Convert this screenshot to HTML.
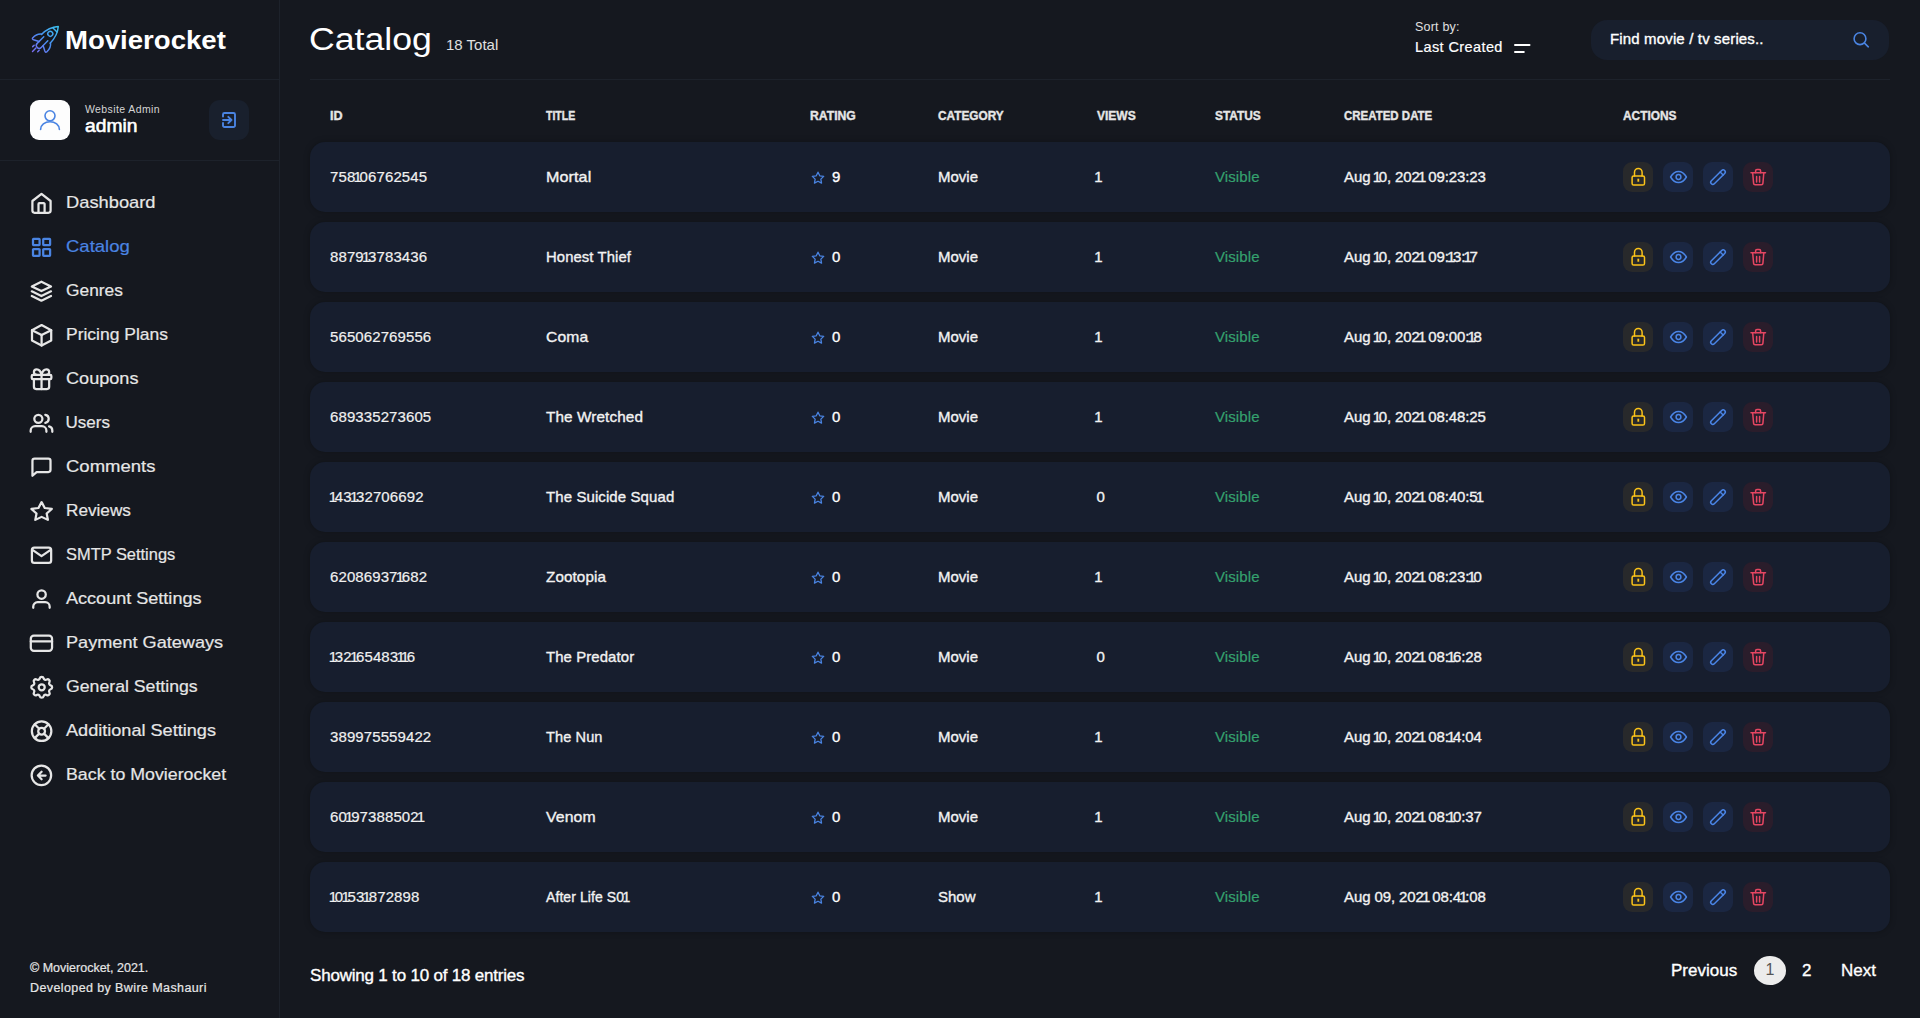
<!DOCTYPE html>
<html><head><meta charset="utf-8">
<style>
*{margin:0;padding:0;box-sizing:border-box}
html,body{width:1920px;height:1018px;overflow:hidden;background:#15181f;font-family:"Liberation Sans",sans-serif;color:#fff}
.t{position:absolute;white-space:nowrap;line-height:1}
.b{position:absolute}
.m{-webkit-text-stroke:0.35px currentColor}
.m2{-webkit-text-stroke:0.2px currentColor}
svg.i{position:absolute;fill:none;stroke-linecap:round;stroke-linejoin:round;overflow:visible}
</style></head><body>

<div class="b" style="left:279px;top:0;width:1px;height:1018px;background:#1d222b"></div>
<div class="b" style="left:0;top:79px;width:279px;height:1px;background:#1d222b"></div>
<div class="b" style="left:0;top:160px;width:279px;height:1px;background:#1d222b"></div>
<div class="b" style="left:310px;top:79px;width:1580px;height:1px;background:#1d222b"></div>
<svg class="i" style="left:0;top:0;width:80px;height:70px" viewBox="0 0 80 70" stroke-width="1.45">
<defs><linearGradient id="rg" x1="0" y1="0" x2="0" y2="36" gradientUnits="userSpaceOnUse"><stop offset="0" stop-color="#3cc4f2"/><stop offset="0.55" stop-color="#4a8cf0"/><stop offset="1" stop-color="#7d6cf2"/></linearGradient></defs>
<g stroke="url(#rg)" transform="translate(58.06,26.34) rotate(45)">
<path d="M-6 17.5C-6 10-3.3 4 .3 0 3.8 4 6.3 10 6.3 17.5"/>
<path d="M-2.7 4.8H3.3"/>
<circle cx="-.2" cy="10.8" r="2.5"/>
<path d="M-6 17C-9.6 19.5-9.9 22.5-9.8 26.2Q-9.5 27.6-7.8 26.8L-2.7 24.2"/>
<path d="M6.3 17C9.9 19.5 10.2 22.5 10.1 26.2Q9.8 27.6 8.1 26.8L3 24.2"/>
<path d="M-2.7 17.5V26.8a2.85 2.85 0 0 0 5.7 0V17.5"/>
<path d="M-.3 31V35.8M-3.6 30.2V32.3M3.5 30.2V32.3"/>
</g></svg>
<div class="t " style="left:65px;top:26.90px;font-size:26px;color:#fff;font-weight:bold;transform:scaleX(1.06);transform-origin:0 0">Movierocket</div>
<div class="b" style="left:30px;top:100px;width:40px;height:40px;background:#fdfdfd;border-radius:9px"></div>
<svg class="i" style="left:0;top:0;width:80px;height:150px" viewBox="0 0 80 150" stroke="#4a84e2" stroke-width="1.6"><circle cx="50" cy="115.8" r="5"/><path d="M40.6 129.5a9.4 7.8 0 0 1 18.8 0"/></svg>
<div class="t " style="left:85px;top:104.08px;font-size:10.5px;color:#d4d4d4;letter-spacing:0.4px">Website Admin</div>
<div class="t " style="left:85px;top:117.88px;font-size:17.5px;color:#fff;-webkit-text-stroke:0.55px #fff;transform:scaleX(1.1);transform-origin:0 0">admin</div>
<div class="b" style="left:209px;top:100px;width:40px;height:40px;background:#19202d;border-radius:11px"></div>
<svg class="i" style="left:0;top:0;width:260px;height:150px" viewBox="0 0 260 150" stroke="#4a84e2" stroke-width="1.9"><path d="M223 116.5V114.5a1.5 1.5 0 0 1 1.5-1.5H233.5a1.5 1.5 0 0 1 1.5 1.5V125.5a1.5 1.5 0 0 1-1.5 1.5H224.5a1.5 1.5 0 0 1-1.5-1.5V123"/><path d="M223 120H231.5M228.3 116.8L231.5 120L228.3 123.2"/></svg>
<svg class="i" style="left:0;top:0;width:280px;height:800px" viewBox="0 0 280 800" stroke-width="2.25">
<g stroke="#e6e6e6"><path d="M32.4 201V210.6a2.2 2.2 0 0 0 2.2 2.2H48.4a2.2 2.2 0 0 0 2.2-2.2V201L41.5 193.8Z"/><path d="M38.5 212.8V204a.8 .8 0 0 1 .8-.8h4.5a.8 .8 0 0 1 .8 .8V212.8"/></g>
<g stroke="#4a84e2"><rect x="33" y="238.9" width="6.6" height="6.2" rx=".6"/><rect x="43.2" y="238.9" width="6.9" height="6.2" rx=".6"/><rect x="33" y="249" width="6.6" height="6.8" rx=".6"/><rect x="43.2" y="249" width="6.9" height="6.8" rx=".6"/></g>
<g stroke="#e6e6e6"><path d="M41.4 281.7L31.8 286.4 41.4 291.1 51 286.4Z"/><path d="M31.8 291.3L41.4 296 51 291.3"/><path d="M31.8 296L41.4 300.7 51 296"/></g>
<g stroke="#e6e6e6"><path d="M41.6 325.1L51.2 330.2V340.4L41.6 345.5 32 340.4V330.2Z"/><path d="M41.6 335.1L51.2 330.2"/><path d="M41.6 335.1V345.5"/><path d="M41.6 335.1L32 330.2"/></g>
<g stroke="#e6e6e6"><g transform="translate(41.55 379.2) scale(1.09) translate(-12 -12)" stroke-width="2.06"><rect x="3" y="8" width="18" height="4" rx="1"/><path d="M12 8v13"/><path d="M19 12v7a2 2 0 0 1-2 2H7a2 2 0 0 1-2-2v-7"/><path d="M7.5 8a2.5 2.5 0 0 1 0-5A4.8 8 0 0 1 12 8a4.8 8 0 0 1 4.5-5 2.5 2.5 0 0 1 0 5"/></g></g>
<g stroke="#e6e6e6"><circle cx="38.35" cy="418.8" r="4.05"/><path d="M30.65 431.8V430.7a4.5 4.5 0 0 1 4.5-4.5H41.9a4.5 4.5 0 0 1 4.5 4.5V431.8"/><path d="M45.3 414.8a4.05 4.05 0 0 1 0 8"/><path d="M52.3 431.8V430.5a4.3 4.3 0 0 0-3.2-4.15"/></g>
<g stroke="#e6e6e6"><path d="M32.45 475.75V460.85a2.2 2.2 0 0 1 2.2-2.2H48.3a2.2 2.2 0 0 1 2.2 2.2V469.85a2.2 2.2 0 0 1-2.2 2.2H36.6Z"/></g>
<g stroke="#e6e6e6"><g transform="translate(41.6 511) scale(1.02 .94) translate(-12 -11.5)" stroke-width="2.2"><path d="M12 17.75l-6.172 3.245 1.179-6.873-5-4.867 6.9-1L12 2l3.086 6.253 6.9 1-5 4.867 1.179 6.873z"/></g></g>
<g stroke="#e6e6e6"><rect x="31.9" y="547.55" width="19.25" height="15.4" rx="2.4"/><path d="M33.2 550.3L41.5 556.2 49.9 550.3"/></g>
<g stroke="#e6e6e6"><circle cx="41.6" cy="594.55" r="4.2"/><path d="M33.25 607.75V606.5a4.35 4.35 0 0 1 4.35-4.35H45.3a4.35 4.35 0 0 1 4.35 4.35V607.75"/></g>
<g stroke="#e6e6e6"><rect x="30.8" y="635.65" width="21.25" height="15.2" rx="3"/><path d="M30.8 641.4H52.05"/></g>
<g stroke="#e6e6e6"><g transform="translate(41.7 687.3) scale(1.16) translate(-12 -12)" stroke-width="1.95"><path d="M10.325 4.317c.426-1.756 2.924-1.756 3.35 0a1.724 1.724 0 0 0 2.573 1.066c1.543-.94 3.31.826 2.37 2.37a1.724 1.724 0 0 0 1.065 2.572c1.756.426 1.756 2.924 0 3.35a1.724 1.724 0 0 0-1.066 2.573c.94 1.543-.826 3.31-2.37 2.370a1.724 1.724 0 0 0-2.572 1.065c-.426 1.756-2.924 1.756-3.35 0a1.724 1.724 0 0 0-2.573-1.066c-1.543.94-3.31-.826-2.37-2.37a1.724 1.724 0 0 0-1.065-2.572c-1.756-.426-1.756-2.924 0-3.35a1.724 1.724 0 0 0 1.066-2.573c-.94-1.543.826-3.31 2.37-2.37 1 .608 2.296.07 2.572-1.065z"/><circle cx="12" cy="12" r="2.6"/></g></g>
<g stroke="#e6e6e6"><circle cx="41.6" cy="731.2" r="9.75"/><circle cx="41.6" cy="731.2" r="3.4"/><path d="M44 733.6L48.5 738.1M39.2 733.6L34.7 738.1M39.2 728.8L34.7 724.3M44 728.8L48.5 724.3"/></g>
<g stroke="#e6e6e6"><circle cx="41.4" cy="775.3" r="9.75"/><path d="M37.9 775.5H45.6M41.6 771.8L37.9 775.5 41.6 779.2"/></g>
</svg>
<div class="t m2" style="left:65.6px;top:193.55px;font-size:17px;color:#e6e6e6;transform:scaleX(1.076);transform-origin:0 0">Dashboard</div>
<div class="t m2" style="left:65.6px;top:237.55px;font-size:17px;color:#4a84e2;transform:scaleX(1.089);transform-origin:0 0">Catalog</div>
<div class="t m2" style="left:65.6px;top:281.55px;font-size:17px;color:#e6e6e6;transform:scaleX(1.02);transform-origin:0 0">Genres</div>
<div class="t m2" style="left:65.6px;top:325.55px;font-size:17px;color:#e6e6e6;transform:scaleX(1.028);transform-origin:0 0">Pricing Plans</div>
<div class="t m2" style="left:65.6px;top:369.55px;font-size:17px;color:#e6e6e6;transform:scaleX(1.065);transform-origin:0 0">Coupons</div>
<div class="t m2" style="left:65.6px;top:413.55px;font-size:17px;color:#e6e6e6">Users</div>
<div class="t m2" style="left:65.6px;top:457.55px;font-size:17px;color:#e6e6e6;transform:scaleX(1.089);transform-origin:0 0">Comments</div>
<div class="t m2" style="left:65.6px;top:501.55px;font-size:17px;color:#e6e6e6;transform:scaleX(1.01);transform-origin:0 0">Reviews</div>
<div class="t m2" style="left:65.6px;top:545.55px;font-size:17px;color:#e6e6e6;transform:scaleX(0.966);transform-origin:0 0">SMTP Settings</div>
<div class="t m2" style="left:65.6px;top:589.55px;font-size:17px;color:#e6e6e6;transform:scaleX(1.062);transform-origin:0 0">Account Settings</div>
<div class="t m2" style="left:65.6px;top:633.55px;font-size:17px;color:#e6e6e6;transform:scaleX(1.066);transform-origin:0 0">Payment Gateways</div>
<div class="t m2" style="left:65.6px;top:677.55px;font-size:17px;color:#e6e6e6;transform:scaleX(1.04);transform-origin:0 0">General Settings</div>
<div class="t m2" style="left:65.6px;top:721.55px;font-size:17px;color:#e6e6e6;transform:scaleX(1.065);transform-origin:0 0">Additional Settings</div>
<div class="t m2" style="left:65.6px;top:765.55px;font-size:17px;color:#e6e6e6;transform:scaleX(1.046);transform-origin:0 0">Back to Movierocket</div>
<div class="t m2" style="left:30px;top:962.17px;font-size:12.5px;color:#e6e6e6">© Movierocket, 2021.</div>
<div class="t m2" style="left:30px;top:982.08px;font-size:12.5px;color:#e6e6e6;letter-spacing:0.4px">Developed by Bwire Mashauri</div>
<div class="t " style="left:308.8px;top:23.65px;font-size:31px;color:#fff;transform:scaleX(1.15);transform-origin:0 0">Catalog</div>
<div class="t " style="left:446px;top:36.85px;font-size:15px;color:#e0e0e0">18 Total</div>
<div class="t " style="left:1415px;top:20.88px;font-size:12.5px;color:#e0e0e0;letter-spacing:0.2px">Sort by:</div>
<div class="t m2" style="left:1415px;top:39.58px;font-size:14.5px;color:#fff;letter-spacing:0.4px">Last Created</div>
<svg class="i" style="left:0;top:0;width:1540px;height:60px" viewBox="0 0 1540 60" stroke="#fff" stroke-width="2"><path d="M1515 45H1529.5M1515 52H1523.8"/></svg>
<div class="b" style="left:1591px;top:20px;width:298px;height:40px;background:#181f2d;border-radius:16px"></div>
<div class="t m" style="left:1610px;top:31.25px;font-size:15px;color:#fff;letter-spacing:0.15px">Find movie / tv series..</div>
<svg class="i" style="left:0;top:0;width:1900px;height:60px" viewBox="0 0 1900 60" stroke="#4a84e2" stroke-width="1.6"><circle cx="1860" cy="38.7" r="5.9"/><path d="M1864.5 43.2L1868.3 46.8"/></svg>
<div class="t m" style="left:330px;top:109.60px;font-size:12px;color:#e6e6e6;font-weight:bold;transform:scaleX(1.05);transform-origin:0 0">ID</div>
<div class="t m" style="left:546px;top:109.60px;font-size:12px;color:#e6e6e6;font-weight:bold;transform:scaleX(0.877);transform-origin:0 0">TITLE</div>
<div class="t m" style="left:810px;top:109.60px;font-size:12px;color:#e6e6e6;font-weight:bold;transform:scaleX(1.015);transform-origin:0 0">RATING</div>
<div class="t m" style="left:938px;top:109.60px;font-size:12px;color:#e6e6e6;font-weight:bold;transform:scaleX(0.986);transform-origin:0 0">CATEGORY</div>
<div class="t m" style="left:1097px;top:109.60px;font-size:12px;color:#e6e6e6;font-weight:bold">VIEWS</div>
<div class="t m" style="left:1215px;top:109.60px;font-size:12px;color:#e6e6e6;font-weight:bold;transform:scaleX(0.99);transform-origin:0 0">STATUS</div>
<div class="t m" style="left:1344px;top:109.60px;font-size:12px;color:#e6e6e6;font-weight:bold;transform:scaleX(0.957);transform-origin:0 0">CREATED DATE</div>
<div class="t m" style="left:1623px;top:109.60px;font-size:12px;color:#e6e6e6;font-weight:bold;transform:scaleX(0.99);transform-origin:0 0">ACTIONS</div>
<div class="b" style="left:310px;top:142px;width:1580px;height:70px;background:#171e2e;border-radius:15px;box-shadow:0 0 6px rgba(0,0,0,.28)"></div>
<div class="t m2" style="left:330px;top:168.85px;font-size:15px;color:#f0f0f0;letter-spacing:0.1px">758<span style="margin:0 -2.31px 0 -1.89px">1</span>06762545</div>
<div class="t m" style="left:546px;top:168.85px;font-size:15px;color:#f2f2f2;letter-spacing:0.1px;transform:scaleX(1.073);transform-origin:0 0">Mortal</div>
<svg class="i" style="left:811px;top:170.5px;width:14px;height:14px" viewBox="0 0 14 14" stroke="#4a84e2" stroke-width="1.3"><path d="M7 1.2l1.75 3.6 3.95.55-2.85 2.8.68 3.95L7 10.25 3.47 12.1l.68-3.95-2.85-2.8 3.95-.55z"/></svg>
<div class="t m" style="left:832px;top:168.85px;font-size:15px;color:#fff">9</div>
<div class="t m" style="left:938px;top:168.85px;font-size:15px;color:#f2f2f2">Movie</div>
<div class="t m" style="left:1094.3px;top:168.85px;font-size:15px;color:#f2f2f2">1</div>
<div class="t m2" style="left:1215px;top:168.85px;font-size:15px;color:#35a26f;letter-spacing:0.1px">Visible</div>
<div class="t m" style="left:1344px;top:168.85px;font-size:15px;color:#f2f2f2;letter-spacing:-0.1px">Aug <span style="margin:0 -2.20px 0 -1.80px">1</span>0, 202<span style="margin:0 -2.20px 0 -1.80px">1</span> 09:23:23</div>
<div class="b" style="left:1623px;top:162px;width:30px;height:30px;background:#28292b;border-radius:9px"></div>
<div class="b" style="left:1663px;top:162px;width:30px;height:30px;background:#1b2742;border-radius:9px"></div>
<div class="b" style="left:1703px;top:162px;width:30px;height:30px;background:#1b2742;border-radius:9px"></div>
<div class="b" style="left:1743px;top:162px;width:30px;height:30px;background:#2a1d2b;border-radius:9px"></div>
<svg class="i" style="left:1600px;top:142px;width:200px;height:70px" viewBox="0 0 200 70" stroke-width="1.5">
<g stroke="#fcc419"><rect x="32.1" y="34" width="12.4" height="9.1" rx="1.6"/><path d="M34.5 34V30.3a3.8 3.8 0 0 1 7.6 0V34"/><rect x="37.4" y="36.7" width="1.8" height="3" fill="#fcc419" stroke="none"/></g>
<g stroke="#4a85e6"><path d="M70.6 35c2.2-3.8 4.8-5.6 7.9-5.6s5.7 1.8 7.9 5.6c-2.2 3.8-4.8 5.6-7.9 5.6s-5.7-1.8-7.9-5.6z"/><circle cx="78.5" cy="35" r="2.4"/></g>
<g stroke="#4a85e6" transform="translate(118 35.15) rotate(-45)"><rect x="-9.4" y="-2.1" width="18.8" height="4.2" rx="2.1"/><path d="M5.2 -2.1V2.1"/></g>
<g stroke="#e64662"><path d="M151 30.8H165.5"/><path d="M155.6 30.8V28.8a1.4 1.4 0 0 1 1.4-1.4h2.2a1.4 1.4 0 0 1 1.4 1.4v2"/><path d="M152.7 31L153.6 41.4a1.5 1.5 0 0 0 1.5 1.4h6.3a1.5 1.5 0 0 0 1.5-1.4L163.8 31"/><path d="M156.6 34.5V40M159.6 34.5V40"/></g>
</svg>
<div class="b" style="left:310px;top:222px;width:1580px;height:70px;background:#171e2e;border-radius:15px;box-shadow:0 0 6px rgba(0,0,0,.28)"></div>
<div class="t m2" style="left:330px;top:248.85px;font-size:15px;color:#f0f0f0;letter-spacing:0.1px">8879<span style="margin:0 -2.31px 0 -1.89px">1</span>3783436</div>
<div class="t m" style="left:546px;top:248.85px;font-size:15px;color:#f2f2f2;letter-spacing:0.1px;transform:scaleX(0.988);transform-origin:0 0">Honest Thief</div>
<svg class="i" style="left:811px;top:250.5px;width:14px;height:14px" viewBox="0 0 14 14" stroke="#4a84e2" stroke-width="1.3"><path d="M7 1.2l1.75 3.6 3.95.55-2.85 2.8.68 3.95L7 10.25 3.47 12.1l.68-3.95-2.85-2.8 3.95-.55z"/></svg>
<div class="t m" style="left:832px;top:248.85px;font-size:15px;color:#fff">0</div>
<div class="t m" style="left:938px;top:248.85px;font-size:15px;color:#f2f2f2">Movie</div>
<div class="t m" style="left:1094.3px;top:248.85px;font-size:15px;color:#f2f2f2">1</div>
<div class="t m2" style="left:1215px;top:248.85px;font-size:15px;color:#35a26f;letter-spacing:0.1px">Visible</div>
<div class="t m" style="left:1344px;top:248.85px;font-size:15px;color:#f2f2f2;letter-spacing:-0.1px">Aug <span style="margin:0 -2.20px 0 -1.80px">1</span>0, 202<span style="margin:0 -2.20px 0 -1.80px">1</span> 09:<span style="margin:0 -2.20px 0 -1.80px">1</span>3:<span style="margin:0 -2.20px 0 -1.80px">1</span>7</div>
<div class="b" style="left:1623px;top:242px;width:30px;height:30px;background:#28292b;border-radius:9px"></div>
<div class="b" style="left:1663px;top:242px;width:30px;height:30px;background:#1b2742;border-radius:9px"></div>
<div class="b" style="left:1703px;top:242px;width:30px;height:30px;background:#1b2742;border-radius:9px"></div>
<div class="b" style="left:1743px;top:242px;width:30px;height:30px;background:#2a1d2b;border-radius:9px"></div>
<svg class="i" style="left:1600px;top:222px;width:200px;height:70px" viewBox="0 0 200 70" stroke-width="1.5">
<g stroke="#fcc419"><rect x="32.1" y="34" width="12.4" height="9.1" rx="1.6"/><path d="M34.5 34V30.3a3.8 3.8 0 0 1 7.6 0V34"/><rect x="37.4" y="36.7" width="1.8" height="3" fill="#fcc419" stroke="none"/></g>
<g stroke="#4a85e6"><path d="M70.6 35c2.2-3.8 4.8-5.6 7.9-5.6s5.7 1.8 7.9 5.6c-2.2 3.8-4.8 5.6-7.9 5.6s-5.7-1.8-7.9-5.6z"/><circle cx="78.5" cy="35" r="2.4"/></g>
<g stroke="#4a85e6" transform="translate(118 35.15) rotate(-45)"><rect x="-9.4" y="-2.1" width="18.8" height="4.2" rx="2.1"/><path d="M5.2 -2.1V2.1"/></g>
<g stroke="#e64662"><path d="M151 30.8H165.5"/><path d="M155.6 30.8V28.8a1.4 1.4 0 0 1 1.4-1.4h2.2a1.4 1.4 0 0 1 1.4 1.4v2"/><path d="M152.7 31L153.6 41.4a1.5 1.5 0 0 0 1.5 1.4h6.3a1.5 1.5 0 0 0 1.5-1.4L163.8 31"/><path d="M156.6 34.5V40M159.6 34.5V40"/></g>
</svg>
<div class="b" style="left:310px;top:302px;width:1580px;height:70px;background:#171e2e;border-radius:15px;box-shadow:0 0 6px rgba(0,0,0,.28)"></div>
<div class="t m2" style="left:330px;top:328.85px;font-size:15px;color:#f0f0f0;letter-spacing:0.1px">565062769556</div>
<div class="t m" style="left:546px;top:328.85px;font-size:15px;color:#f2f2f2;letter-spacing:0.1px;transform:scaleX(1.044);transform-origin:0 0">Coma</div>
<svg class="i" style="left:811px;top:330.5px;width:14px;height:14px" viewBox="0 0 14 14" stroke="#4a84e2" stroke-width="1.3"><path d="M7 1.2l1.75 3.6 3.95.55-2.85 2.8.68 3.95L7 10.25 3.47 12.1l.68-3.95-2.85-2.8 3.95-.55z"/></svg>
<div class="t m" style="left:832px;top:328.85px;font-size:15px;color:#fff">0</div>
<div class="t m" style="left:938px;top:328.85px;font-size:15px;color:#f2f2f2">Movie</div>
<div class="t m" style="left:1094.3px;top:328.85px;font-size:15px;color:#f2f2f2">1</div>
<div class="t m2" style="left:1215px;top:328.85px;font-size:15px;color:#35a26f;letter-spacing:0.1px">Visible</div>
<div class="t m" style="left:1344px;top:328.85px;font-size:15px;color:#f2f2f2;letter-spacing:-0.1px">Aug <span style="margin:0 -2.20px 0 -1.80px">1</span>0, 202<span style="margin:0 -2.20px 0 -1.80px">1</span> 09:00:<span style="margin:0 -2.20px 0 -1.80px">1</span>8</div>
<div class="b" style="left:1623px;top:322px;width:30px;height:30px;background:#28292b;border-radius:9px"></div>
<div class="b" style="left:1663px;top:322px;width:30px;height:30px;background:#1b2742;border-radius:9px"></div>
<div class="b" style="left:1703px;top:322px;width:30px;height:30px;background:#1b2742;border-radius:9px"></div>
<div class="b" style="left:1743px;top:322px;width:30px;height:30px;background:#2a1d2b;border-radius:9px"></div>
<svg class="i" style="left:1600px;top:302px;width:200px;height:70px" viewBox="0 0 200 70" stroke-width="1.5">
<g stroke="#fcc419"><rect x="32.1" y="34" width="12.4" height="9.1" rx="1.6"/><path d="M34.5 34V30.3a3.8 3.8 0 0 1 7.6 0V34"/><rect x="37.4" y="36.7" width="1.8" height="3" fill="#fcc419" stroke="none"/></g>
<g stroke="#4a85e6"><path d="M70.6 35c2.2-3.8 4.8-5.6 7.9-5.6s5.7 1.8 7.9 5.6c-2.2 3.8-4.8 5.6-7.9 5.6s-5.7-1.8-7.9-5.6z"/><circle cx="78.5" cy="35" r="2.4"/></g>
<g stroke="#4a85e6" transform="translate(118 35.15) rotate(-45)"><rect x="-9.4" y="-2.1" width="18.8" height="4.2" rx="2.1"/><path d="M5.2 -2.1V2.1"/></g>
<g stroke="#e64662"><path d="M151 30.8H165.5"/><path d="M155.6 30.8V28.8a1.4 1.4 0 0 1 1.4-1.4h2.2a1.4 1.4 0 0 1 1.4 1.4v2"/><path d="M152.7 31L153.6 41.4a1.5 1.5 0 0 0 1.5 1.4h6.3a1.5 1.5 0 0 0 1.5-1.4L163.8 31"/><path d="M156.6 34.5V40M159.6 34.5V40"/></g>
</svg>
<div class="b" style="left:310px;top:382px;width:1580px;height:70px;background:#171e2e;border-radius:15px;box-shadow:0 0 6px rgba(0,0,0,.28)"></div>
<div class="t m2" style="left:330px;top:408.85px;font-size:15px;color:#f0f0f0;letter-spacing:0.1px">689335273605</div>
<div class="t m" style="left:546px;top:408.85px;font-size:15px;color:#f2f2f2;letter-spacing:0.1px;transform:scaleX(1.02);transform-origin:0 0">The Wretched</div>
<svg class="i" style="left:811px;top:410.5px;width:14px;height:14px" viewBox="0 0 14 14" stroke="#4a84e2" stroke-width="1.3"><path d="M7 1.2l1.75 3.6 3.95.55-2.85 2.8.68 3.95L7 10.25 3.47 12.1l.68-3.95-2.85-2.8 3.95-.55z"/></svg>
<div class="t m" style="left:832px;top:408.85px;font-size:15px;color:#fff">0</div>
<div class="t m" style="left:938px;top:408.85px;font-size:15px;color:#f2f2f2">Movie</div>
<div class="t m" style="left:1094.3px;top:408.85px;font-size:15px;color:#f2f2f2">1</div>
<div class="t m2" style="left:1215px;top:408.85px;font-size:15px;color:#35a26f;letter-spacing:0.1px">Visible</div>
<div class="t m" style="left:1344px;top:408.85px;font-size:15px;color:#f2f2f2;letter-spacing:-0.1px">Aug <span style="margin:0 -2.20px 0 -1.80px">1</span>0, 202<span style="margin:0 -2.20px 0 -1.80px">1</span> 08:48:25</div>
<div class="b" style="left:1623px;top:402px;width:30px;height:30px;background:#28292b;border-radius:9px"></div>
<div class="b" style="left:1663px;top:402px;width:30px;height:30px;background:#1b2742;border-radius:9px"></div>
<div class="b" style="left:1703px;top:402px;width:30px;height:30px;background:#1b2742;border-radius:9px"></div>
<div class="b" style="left:1743px;top:402px;width:30px;height:30px;background:#2a1d2b;border-radius:9px"></div>
<svg class="i" style="left:1600px;top:382px;width:200px;height:70px" viewBox="0 0 200 70" stroke-width="1.5">
<g stroke="#fcc419"><rect x="32.1" y="34" width="12.4" height="9.1" rx="1.6"/><path d="M34.5 34V30.3a3.8 3.8 0 0 1 7.6 0V34"/><rect x="37.4" y="36.7" width="1.8" height="3" fill="#fcc419" stroke="none"/></g>
<g stroke="#4a85e6"><path d="M70.6 35c2.2-3.8 4.8-5.6 7.9-5.6s5.7 1.8 7.9 5.6c-2.2 3.8-4.8 5.6-7.9 5.6s-5.7-1.8-7.9-5.6z"/><circle cx="78.5" cy="35" r="2.4"/></g>
<g stroke="#4a85e6" transform="translate(118 35.15) rotate(-45)"><rect x="-9.4" y="-2.1" width="18.8" height="4.2" rx="2.1"/><path d="M5.2 -2.1V2.1"/></g>
<g stroke="#e64662"><path d="M151 30.8H165.5"/><path d="M155.6 30.8V28.8a1.4 1.4 0 0 1 1.4-1.4h2.2a1.4 1.4 0 0 1 1.4 1.4v2"/><path d="M152.7 31L153.6 41.4a1.5 1.5 0 0 0 1.5 1.4h6.3a1.5 1.5 0 0 0 1.5-1.4L163.8 31"/><path d="M156.6 34.5V40M159.6 34.5V40"/></g>
</svg>
<div class="b" style="left:310px;top:462px;width:1580px;height:70px;background:#171e2e;border-radius:15px;box-shadow:0 0 6px rgba(0,0,0,.28)"></div>
<div class="t m2" style="left:330px;top:488.85px;font-size:15px;color:#f0f0f0;letter-spacing:0.1px"><span style="margin:0 -2.31px 0 -1.30px">1</span>43<span style="margin:0 -2.31px 0 -1.89px">1</span>32706692</div>
<div class="t m" style="left:546px;top:488.85px;font-size:15px;color:#f2f2f2;letter-spacing:0.1px;transform:scaleX(0.999);transform-origin:0 0">The Suicide Squad</div>
<svg class="i" style="left:811px;top:490.5px;width:14px;height:14px" viewBox="0 0 14 14" stroke="#4a84e2" stroke-width="1.3"><path d="M7 1.2l1.75 3.6 3.95.55-2.85 2.8.68 3.95L7 10.25 3.47 12.1l.68-3.95-2.85-2.8 3.95-.55z"/></svg>
<div class="t m" style="left:832px;top:488.85px;font-size:15px;color:#fff">0</div>
<div class="t m" style="left:938px;top:488.85px;font-size:15px;color:#f2f2f2">Movie</div>
<div class="t m" style="left:1096.5px;top:488.85px;font-size:15px;color:#f2f2f2">0</div>
<div class="t m2" style="left:1215px;top:488.85px;font-size:15px;color:#35a26f;letter-spacing:0.1px">Visible</div>
<div class="t m" style="left:1344px;top:488.85px;font-size:15px;color:#f2f2f2;letter-spacing:-0.1px">Aug <span style="margin:0 -2.20px 0 -1.80px">1</span>0, 202<span style="margin:0 -2.20px 0 -1.80px">1</span> 08:40:5<span style="margin:0 -2.20px 0 -1.80px">1</span></div>
<div class="b" style="left:1623px;top:482px;width:30px;height:30px;background:#28292b;border-radius:9px"></div>
<div class="b" style="left:1663px;top:482px;width:30px;height:30px;background:#1b2742;border-radius:9px"></div>
<div class="b" style="left:1703px;top:482px;width:30px;height:30px;background:#1b2742;border-radius:9px"></div>
<div class="b" style="left:1743px;top:482px;width:30px;height:30px;background:#2a1d2b;border-radius:9px"></div>
<svg class="i" style="left:1600px;top:462px;width:200px;height:70px" viewBox="0 0 200 70" stroke-width="1.5">
<g stroke="#fcc419"><rect x="32.1" y="34" width="12.4" height="9.1" rx="1.6"/><path d="M34.5 34V30.3a3.8 3.8 0 0 1 7.6 0V34"/><rect x="37.4" y="36.7" width="1.8" height="3" fill="#fcc419" stroke="none"/></g>
<g stroke="#4a85e6"><path d="M70.6 35c2.2-3.8 4.8-5.6 7.9-5.6s5.7 1.8 7.9 5.6c-2.2 3.8-4.8 5.6-7.9 5.6s-5.7-1.8-7.9-5.6z"/><circle cx="78.5" cy="35" r="2.4"/></g>
<g stroke="#4a85e6" transform="translate(118 35.15) rotate(-45)"><rect x="-9.4" y="-2.1" width="18.8" height="4.2" rx="2.1"/><path d="M5.2 -2.1V2.1"/></g>
<g stroke="#e64662"><path d="M151 30.8H165.5"/><path d="M155.6 30.8V28.8a1.4 1.4 0 0 1 1.4-1.4h2.2a1.4 1.4 0 0 1 1.4 1.4v2"/><path d="M152.7 31L153.6 41.4a1.5 1.5 0 0 0 1.5 1.4h6.3a1.5 1.5 0 0 0 1.5-1.4L163.8 31"/><path d="M156.6 34.5V40M159.6 34.5V40"/></g>
</svg>
<div class="b" style="left:310px;top:542px;width:1580px;height:70px;background:#171e2e;border-radius:15px;box-shadow:0 0 6px rgba(0,0,0,.28)"></div>
<div class="t m2" style="left:330px;top:568.85px;font-size:15px;color:#f0f0f0;letter-spacing:0.1px">62086937<span style="margin:0 -2.31px 0 -1.89px">1</span>682</div>
<div class="t m" style="left:546px;top:568.85px;font-size:15px;color:#f2f2f2;letter-spacing:0.1px;transform:scaleX(1.015);transform-origin:0 0">Zootopia</div>
<svg class="i" style="left:811px;top:570.5px;width:14px;height:14px" viewBox="0 0 14 14" stroke="#4a84e2" stroke-width="1.3"><path d="M7 1.2l1.75 3.6 3.95.55-2.85 2.8.68 3.95L7 10.25 3.47 12.1l.68-3.95-2.85-2.8 3.95-.55z"/></svg>
<div class="t m" style="left:832px;top:568.85px;font-size:15px;color:#fff">0</div>
<div class="t m" style="left:938px;top:568.85px;font-size:15px;color:#f2f2f2">Movie</div>
<div class="t m" style="left:1094.3px;top:568.85px;font-size:15px;color:#f2f2f2">1</div>
<div class="t m2" style="left:1215px;top:568.85px;font-size:15px;color:#35a26f;letter-spacing:0.1px">Visible</div>
<div class="t m" style="left:1344px;top:568.85px;font-size:15px;color:#f2f2f2;letter-spacing:-0.1px">Aug <span style="margin:0 -2.20px 0 -1.80px">1</span>0, 202<span style="margin:0 -2.20px 0 -1.80px">1</span> 08:23:<span style="margin:0 -2.20px 0 -1.80px">1</span>0</div>
<div class="b" style="left:1623px;top:562px;width:30px;height:30px;background:#28292b;border-radius:9px"></div>
<div class="b" style="left:1663px;top:562px;width:30px;height:30px;background:#1b2742;border-radius:9px"></div>
<div class="b" style="left:1703px;top:562px;width:30px;height:30px;background:#1b2742;border-radius:9px"></div>
<div class="b" style="left:1743px;top:562px;width:30px;height:30px;background:#2a1d2b;border-radius:9px"></div>
<svg class="i" style="left:1600px;top:542px;width:200px;height:70px" viewBox="0 0 200 70" stroke-width="1.5">
<g stroke="#fcc419"><rect x="32.1" y="34" width="12.4" height="9.1" rx="1.6"/><path d="M34.5 34V30.3a3.8 3.8 0 0 1 7.6 0V34"/><rect x="37.4" y="36.7" width="1.8" height="3" fill="#fcc419" stroke="none"/></g>
<g stroke="#4a85e6"><path d="M70.6 35c2.2-3.8 4.8-5.6 7.9-5.6s5.7 1.8 7.9 5.6c-2.2 3.8-4.8 5.6-7.9 5.6s-5.7-1.8-7.9-5.6z"/><circle cx="78.5" cy="35" r="2.4"/></g>
<g stroke="#4a85e6" transform="translate(118 35.15) rotate(-45)"><rect x="-9.4" y="-2.1" width="18.8" height="4.2" rx="2.1"/><path d="M5.2 -2.1V2.1"/></g>
<g stroke="#e64662"><path d="M151 30.8H165.5"/><path d="M155.6 30.8V28.8a1.4 1.4 0 0 1 1.4-1.4h2.2a1.4 1.4 0 0 1 1.4 1.4v2"/><path d="M152.7 31L153.6 41.4a1.5 1.5 0 0 0 1.5 1.4h6.3a1.5 1.5 0 0 0 1.5-1.4L163.8 31"/><path d="M156.6 34.5V40M159.6 34.5V40"/></g>
</svg>
<div class="b" style="left:310px;top:622px;width:1580px;height:70px;background:#171e2e;border-radius:15px;box-shadow:0 0 6px rgba(0,0,0,.28)"></div>
<div class="t m2" style="left:330px;top:648.85px;font-size:15px;color:#f0f0f0;letter-spacing:0.1px"><span style="margin:0 -2.31px 0 -1.30px">1</span>32<span style="margin:0 -2.31px 0 -1.89px">1</span>65483<span style="margin:0 -2.31px 0 -1.89px">1</span><span style="margin:0 -2.31px 0 -1.89px">1</span>6</div>
<div class="t m" style="left:546px;top:648.85px;font-size:15px;color:#f2f2f2;letter-spacing:0.1px;transform:scaleX(0.994);transform-origin:0 0">The Predator</div>
<svg class="i" style="left:811px;top:650.5px;width:14px;height:14px" viewBox="0 0 14 14" stroke="#4a84e2" stroke-width="1.3"><path d="M7 1.2l1.75 3.6 3.95.55-2.85 2.8.68 3.95L7 10.25 3.47 12.1l.68-3.95-2.85-2.8 3.95-.55z"/></svg>
<div class="t m" style="left:832px;top:648.85px;font-size:15px;color:#fff">0</div>
<div class="t m" style="left:938px;top:648.85px;font-size:15px;color:#f2f2f2">Movie</div>
<div class="t m" style="left:1096.5px;top:648.85px;font-size:15px;color:#f2f2f2">0</div>
<div class="t m2" style="left:1215px;top:648.85px;font-size:15px;color:#35a26f;letter-spacing:0.1px">Visible</div>
<div class="t m" style="left:1344px;top:648.85px;font-size:15px;color:#f2f2f2;letter-spacing:-0.1px">Aug <span style="margin:0 -2.20px 0 -1.80px">1</span>0, 202<span style="margin:0 -2.20px 0 -1.80px">1</span> 08:<span style="margin:0 -2.20px 0 -1.80px">1</span>6:28</div>
<div class="b" style="left:1623px;top:642px;width:30px;height:30px;background:#28292b;border-radius:9px"></div>
<div class="b" style="left:1663px;top:642px;width:30px;height:30px;background:#1b2742;border-radius:9px"></div>
<div class="b" style="left:1703px;top:642px;width:30px;height:30px;background:#1b2742;border-radius:9px"></div>
<div class="b" style="left:1743px;top:642px;width:30px;height:30px;background:#2a1d2b;border-radius:9px"></div>
<svg class="i" style="left:1600px;top:622px;width:200px;height:70px" viewBox="0 0 200 70" stroke-width="1.5">
<g stroke="#fcc419"><rect x="32.1" y="34" width="12.4" height="9.1" rx="1.6"/><path d="M34.5 34V30.3a3.8 3.8 0 0 1 7.6 0V34"/><rect x="37.4" y="36.7" width="1.8" height="3" fill="#fcc419" stroke="none"/></g>
<g stroke="#4a85e6"><path d="M70.6 35c2.2-3.8 4.8-5.6 7.9-5.6s5.7 1.8 7.9 5.6c-2.2 3.8-4.8 5.6-7.9 5.6s-5.7-1.8-7.9-5.6z"/><circle cx="78.5" cy="35" r="2.4"/></g>
<g stroke="#4a85e6" transform="translate(118 35.15) rotate(-45)"><rect x="-9.4" y="-2.1" width="18.8" height="4.2" rx="2.1"/><path d="M5.2 -2.1V2.1"/></g>
<g stroke="#e64662"><path d="M151 30.8H165.5"/><path d="M155.6 30.8V28.8a1.4 1.4 0 0 1 1.4-1.4h2.2a1.4 1.4 0 0 1 1.4 1.4v2"/><path d="M152.7 31L153.6 41.4a1.5 1.5 0 0 0 1.5 1.4h6.3a1.5 1.5 0 0 0 1.5-1.4L163.8 31"/><path d="M156.6 34.5V40M159.6 34.5V40"/></g>
</svg>
<div class="b" style="left:310px;top:702px;width:1580px;height:70px;background:#171e2e;border-radius:15px;box-shadow:0 0 6px rgba(0,0,0,.28)"></div>
<div class="t m2" style="left:330px;top:728.85px;font-size:15px;color:#f0f0f0;letter-spacing:0.1px">389975559422</div>
<div class="t m" style="left:546px;top:728.85px;font-size:15px;color:#f2f2f2;letter-spacing:0.1px;transform:scaleX(0.971);transform-origin:0 0">The Nun</div>
<svg class="i" style="left:811px;top:730.5px;width:14px;height:14px" viewBox="0 0 14 14" stroke="#4a84e2" stroke-width="1.3"><path d="M7 1.2l1.75 3.6 3.95.55-2.85 2.8.68 3.95L7 10.25 3.47 12.1l.68-3.95-2.85-2.8 3.95-.55z"/></svg>
<div class="t m" style="left:832px;top:728.85px;font-size:15px;color:#fff">0</div>
<div class="t m" style="left:938px;top:728.85px;font-size:15px;color:#f2f2f2">Movie</div>
<div class="t m" style="left:1094.3px;top:728.85px;font-size:15px;color:#f2f2f2">1</div>
<div class="t m2" style="left:1215px;top:728.85px;font-size:15px;color:#35a26f;letter-spacing:0.1px">Visible</div>
<div class="t m" style="left:1344px;top:728.85px;font-size:15px;color:#f2f2f2;letter-spacing:-0.1px">Aug <span style="margin:0 -2.20px 0 -1.80px">1</span>0, 202<span style="margin:0 -2.20px 0 -1.80px">1</span> 08:<span style="margin:0 -2.20px 0 -1.80px">1</span>4:04</div>
<div class="b" style="left:1623px;top:722px;width:30px;height:30px;background:#28292b;border-radius:9px"></div>
<div class="b" style="left:1663px;top:722px;width:30px;height:30px;background:#1b2742;border-radius:9px"></div>
<div class="b" style="left:1703px;top:722px;width:30px;height:30px;background:#1b2742;border-radius:9px"></div>
<div class="b" style="left:1743px;top:722px;width:30px;height:30px;background:#2a1d2b;border-radius:9px"></div>
<svg class="i" style="left:1600px;top:702px;width:200px;height:70px" viewBox="0 0 200 70" stroke-width="1.5">
<g stroke="#fcc419"><rect x="32.1" y="34" width="12.4" height="9.1" rx="1.6"/><path d="M34.5 34V30.3a3.8 3.8 0 0 1 7.6 0V34"/><rect x="37.4" y="36.7" width="1.8" height="3" fill="#fcc419" stroke="none"/></g>
<g stroke="#4a85e6"><path d="M70.6 35c2.2-3.8 4.8-5.6 7.9-5.6s5.7 1.8 7.9 5.6c-2.2 3.8-4.8 5.6-7.9 5.6s-5.7-1.8-7.9-5.6z"/><circle cx="78.5" cy="35" r="2.4"/></g>
<g stroke="#4a85e6" transform="translate(118 35.15) rotate(-45)"><rect x="-9.4" y="-2.1" width="18.8" height="4.2" rx="2.1"/><path d="M5.2 -2.1V2.1"/></g>
<g stroke="#e64662"><path d="M151 30.8H165.5"/><path d="M155.6 30.8V28.8a1.4 1.4 0 0 1 1.4-1.4h2.2a1.4 1.4 0 0 1 1.4 1.4v2"/><path d="M152.7 31L153.6 41.4a1.5 1.5 0 0 0 1.5 1.4h6.3a1.5 1.5 0 0 0 1.5-1.4L163.8 31"/><path d="M156.6 34.5V40M159.6 34.5V40"/></g>
</svg>
<div class="b" style="left:310px;top:782px;width:1580px;height:70px;background:#171e2e;border-radius:15px;box-shadow:0 0 6px rgba(0,0,0,.28)"></div>
<div class="t m2" style="left:330px;top:808.85px;font-size:15px;color:#f0f0f0;letter-spacing:0.1px">60<span style="margin:0 -2.31px 0 -1.89px">1</span>97388502<span style="margin:0 -2.31px 0 -1.89px">1</span></div>
<div class="t m" style="left:546px;top:808.85px;font-size:15px;color:#f2f2f2;letter-spacing:0.1px;transform:scaleX(1.053);transform-origin:0 0">Venom</div>
<svg class="i" style="left:811px;top:810.5px;width:14px;height:14px" viewBox="0 0 14 14" stroke="#4a84e2" stroke-width="1.3"><path d="M7 1.2l1.75 3.6 3.95.55-2.85 2.8.68 3.95L7 10.25 3.47 12.1l.68-3.95-2.85-2.8 3.95-.55z"/></svg>
<div class="t m" style="left:832px;top:808.85px;font-size:15px;color:#fff">0</div>
<div class="t m" style="left:938px;top:808.85px;font-size:15px;color:#f2f2f2">Movie</div>
<div class="t m" style="left:1094.3px;top:808.85px;font-size:15px;color:#f2f2f2">1</div>
<div class="t m2" style="left:1215px;top:808.85px;font-size:15px;color:#35a26f;letter-spacing:0.1px">Visible</div>
<div class="t m" style="left:1344px;top:808.85px;font-size:15px;color:#f2f2f2;letter-spacing:-0.1px">Aug <span style="margin:0 -2.20px 0 -1.80px">1</span>0, 202<span style="margin:0 -2.20px 0 -1.80px">1</span> 08:<span style="margin:0 -2.20px 0 -1.80px">1</span>0:37</div>
<div class="b" style="left:1623px;top:802px;width:30px;height:30px;background:#28292b;border-radius:9px"></div>
<div class="b" style="left:1663px;top:802px;width:30px;height:30px;background:#1b2742;border-radius:9px"></div>
<div class="b" style="left:1703px;top:802px;width:30px;height:30px;background:#1b2742;border-radius:9px"></div>
<div class="b" style="left:1743px;top:802px;width:30px;height:30px;background:#2a1d2b;border-radius:9px"></div>
<svg class="i" style="left:1600px;top:782px;width:200px;height:70px" viewBox="0 0 200 70" stroke-width="1.5">
<g stroke="#fcc419"><rect x="32.1" y="34" width="12.4" height="9.1" rx="1.6"/><path d="M34.5 34V30.3a3.8 3.8 0 0 1 7.6 0V34"/><rect x="37.4" y="36.7" width="1.8" height="3" fill="#fcc419" stroke="none"/></g>
<g stroke="#4a85e6"><path d="M70.6 35c2.2-3.8 4.8-5.6 7.9-5.6s5.7 1.8 7.9 5.6c-2.2 3.8-4.8 5.6-7.9 5.6s-5.7-1.8-7.9-5.6z"/><circle cx="78.5" cy="35" r="2.4"/></g>
<g stroke="#4a85e6" transform="translate(118 35.15) rotate(-45)"><rect x="-9.4" y="-2.1" width="18.8" height="4.2" rx="2.1"/><path d="M5.2 -2.1V2.1"/></g>
<g stroke="#e64662"><path d="M151 30.8H165.5"/><path d="M155.6 30.8V28.8a1.4 1.4 0 0 1 1.4-1.4h2.2a1.4 1.4 0 0 1 1.4 1.4v2"/><path d="M152.7 31L153.6 41.4a1.5 1.5 0 0 0 1.5 1.4h6.3a1.5 1.5 0 0 0 1.5-1.4L163.8 31"/><path d="M156.6 34.5V40M159.6 34.5V40"/></g>
</svg>
<div class="b" style="left:310px;top:862px;width:1580px;height:70px;background:#171e2e;border-radius:15px;box-shadow:0 0 6px rgba(0,0,0,.28)"></div>
<div class="t m2" style="left:330px;top:888.85px;font-size:15px;color:#f0f0f0;letter-spacing:0.1px"><span style="margin:0 -2.31px 0 -1.30px">1</span>0<span style="margin:0 -2.31px 0 -1.89px">1</span>53<span style="margin:0 -2.31px 0 -1.89px">1</span>872898</div>
<div class="t m" style="left:546px;top:888.85px;font-size:15px;color:#f2f2f2;letter-spacing:0.1px;transform:scaleX(0.932);transform-origin:0 0">After Life S0<span style="margin:0 -2.20px 0 -1.80px">1</span></div>
<svg class="i" style="left:811px;top:890.5px;width:14px;height:14px" viewBox="0 0 14 14" stroke="#4a84e2" stroke-width="1.3"><path d="M7 1.2l1.75 3.6 3.95.55-2.85 2.8.68 3.95L7 10.25 3.47 12.1l.68-3.95-2.85-2.8 3.95-.55z"/></svg>
<div class="t m" style="left:832px;top:888.85px;font-size:15px;color:#fff">0</div>
<div class="t m" style="left:938px;top:888.85px;font-size:15px;color:#f2f2f2">Show</div>
<div class="t m" style="left:1094.3px;top:888.85px;font-size:15px;color:#f2f2f2">1</div>
<div class="t m2" style="left:1215px;top:888.85px;font-size:15px;color:#35a26f;letter-spacing:0.1px">Visible</div>
<div class="t m" style="left:1344px;top:888.85px;font-size:15px;color:#f2f2f2;letter-spacing:-0.1px">Aug 09, 202<span style="margin:0 -2.20px 0 -1.80px">1</span> 08:4<span style="margin:0 -2.20px 0 -1.80px">1</span>:08</div>
<div class="b" style="left:1623px;top:882px;width:30px;height:30px;background:#28292b;border-radius:9px"></div>
<div class="b" style="left:1663px;top:882px;width:30px;height:30px;background:#1b2742;border-radius:9px"></div>
<div class="b" style="left:1703px;top:882px;width:30px;height:30px;background:#1b2742;border-radius:9px"></div>
<div class="b" style="left:1743px;top:882px;width:30px;height:30px;background:#2a1d2b;border-radius:9px"></div>
<svg class="i" style="left:1600px;top:862px;width:200px;height:70px" viewBox="0 0 200 70" stroke-width="1.5">
<g stroke="#fcc419"><rect x="32.1" y="34" width="12.4" height="9.1" rx="1.6"/><path d="M34.5 34V30.3a3.8 3.8 0 0 1 7.6 0V34"/><rect x="37.4" y="36.7" width="1.8" height="3" fill="#fcc419" stroke="none"/></g>
<g stroke="#4a85e6"><path d="M70.6 35c2.2-3.8 4.8-5.6 7.9-5.6s5.7 1.8 7.9 5.6c-2.2 3.8-4.8 5.6-7.9 5.6s-5.7-1.8-7.9-5.6z"/><circle cx="78.5" cy="35" r="2.4"/></g>
<g stroke="#4a85e6" transform="translate(118 35.15) rotate(-45)"><rect x="-9.4" y="-2.1" width="18.8" height="4.2" rx="2.1"/><path d="M5.2 -2.1V2.1"/></g>
<g stroke="#e64662"><path d="M151 30.8H165.5"/><path d="M155.6 30.8V28.8a1.4 1.4 0 0 1 1.4-1.4h2.2a1.4 1.4 0 0 1 1.4 1.4v2"/><path d="M152.7 31L153.6 41.4a1.5 1.5 0 0 0 1.5 1.4h6.3a1.5 1.5 0 0 0 1.5-1.4L163.8 31"/><path d="M156.6 34.5V40M159.6 34.5V40"/></g>
</svg>
<div class="t m" style="left:310px;top:966.55px;font-size:17px;color:#fff;letter-spacing:-0.2px">Showing 1 to 10 of 18 entries</div>
<div class="t m" style="left:1671px;top:961.55px;font-size:17px;color:#fff">Previous</div>
<div class="b" style="left:1754px;top:956px;width:32px;height:28.5px;background:#ececec;border-radius:50%"></div>
<div class="t " style="left:1765.5px;top:962.40px;font-size:16px;color:#555">1</div>
<div class="t m" style="left:1802px;top:961.55px;font-size:17px;color:#fff">2</div>
<div class="t m" style="left:1841px;top:961.55px;font-size:17px;color:#fff">Next</div>
</body></html>
